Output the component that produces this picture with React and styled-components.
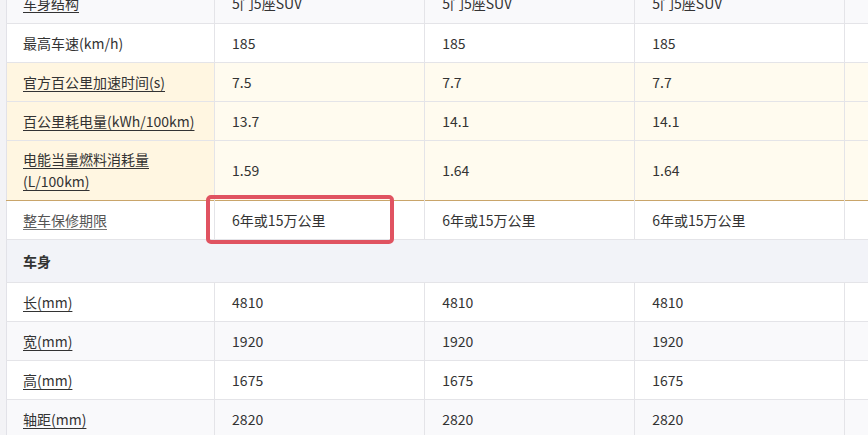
import React from "react";
import styled, { createGlobalStyle } from "styled-components";

const GlobalStyle = createGlobalStyle`
	html, body {
		margin: 0;
		padding: 0;
		background: #f3f3f6;
		overflow: hidden;
	}
	body {
		font-family: "Noto Sans CJK SC", "Noto Sans", sans-serif;
		color: #333;
	}
`

const rows = [
	{ label: "车身结构", link: true, striped: true, values: ["5门5座SUV", "5门5座SUV", "5门5座SUV"] },
	{ label: "最高车速(km/h)", values: ["185", "185", "185"] },
	{ label: "官方百公里加速时间(s)", link: true, hot: true, values: ["7.5", "7.7", "7.7"] },
	{ label: "百公里耗电量(kWh/100km)", link: true, hot: true, values: ["13.7", "14.1", "14.1"] },
	{ label: "电能当量燃料消耗量(L/100km)", link: true, hot: true, last: true, tall: true, values: ["1.59", "1.64", "1.64"] },
	{ label: "整车保修期限", link: true, muted: true, values: ["6年或15万公里", "6年或15万公里", "6年或15万公里"], marked: true },
	{ section: "车身" },
	{ label: "长(mm)", link: true, values: ["4810", "4810", "4810"] },
	{ label: "宽(mm)", link: true, striped: true, values: ["1920", "1920", "1920"] },
	{ label: "高(mm)", link: true, values: ["1675", "1675", "1675"] },
	{ label: "轴距(mm)", link: true, striped: true, values: ["2820", "2820", "2820"] },
];

function App() {
	return (
		<Page>
			<GlobalStyle />
			<Table>
				<colgroup>
					<Col $w={208} />
					<Col $w={210} />
					<Col $w={210} />
					<Col $w={210} />
					<Col $w={210} />
				</colgroup>
				<tbody>
					{rows.map((row, i) =>
						row.section ? (
							<tr key={i}>
								<SectionCell colSpan={5}>{row.section}</SectionCell>
							</tr>
						) : (
							<Row key={i} $striped={row.striped} $hot={row.hot} $last={row.last} $tall={row.tall}>
								<LabelCell $hot={row.hot}>
									{row.link ? <Label $muted={row.muted}>{row.label}</Label> : row.label}
								</LabelCell>
								{row.values.map((v, j) => (
									<ValueCell key={j}>
										{v}
										{row.marked && j === 0 && <Marker />}
									</ValueCell>
								))}
								<ValueCell />
							</Row>
						)
					)}
				</tbody>
			</Table>
		</Page>
	);
}

export default App;

const Page = styled.div`
	width: 868px;
	height: 435px;
	overflow: hidden;
	padding-left: 6px;
	box-sizing: border-box;
`

const Table = styled.table`
	margin-top: -16px;
	width: 1049px;
	table-layout: fixed;
	border-collapse: collapse;
	background: #fff;
	border-left: 1px solid #e2e2e8;
	font-size: 14px;
	line-height: 22px;
`

const Col = styled.col`
	width: ${(p) => p.$w}px;
`

const Row = styled.tr`
	height: ${(p) => (p.$tall ? "60px" : "39px")};
	background: ${(p) => (p.$hot ? "#fffbef" : p.$striped ? "#f9f9fb" : "#fff")};
	border-bottom: 1px solid ${(p) => (p.$last ? "#c9a56a" : "#e4e4e8")};
`

const LabelCell = styled.td`
	padding: 0 16px;
	vertical-align: middle;
	background: ${(p) => (p.$hot ? "#fff6e1" : "transparent")};
	color: #333;
`

const Label = styled.span`
	text-decoration: underline;
	text-underline-offset: 3px;
	text-decoration-color: ${(p) => (p.$muted ? "#777" : "#333")};
	color: ${(p) => (p.$muted ? "#555" : "#333")};
`

const ValueCell = styled.td`
	position: relative;
	padding: 0 17px;
	vertical-align: middle;
	border-left: 1px solid #e4e4e8;
	color: #333;
	white-space: nowrap;
`

const SectionCell = styled.td`
	height: 42px;
	padding: 0 16px;
	background: #f2f3f8;
	border-bottom: 1px solid #e4e4e8;
	font-weight: bold;
	color: #333;
`

const Marker = styled.span`
	position: absolute;
	left: -9px;
	top: -6px;
	width: 188px;
	height: 49px;
	box-sizing: border-box;
	border: 4px solid #e05361;
	border-radius: 5px;
	pointer-events: none;
`
